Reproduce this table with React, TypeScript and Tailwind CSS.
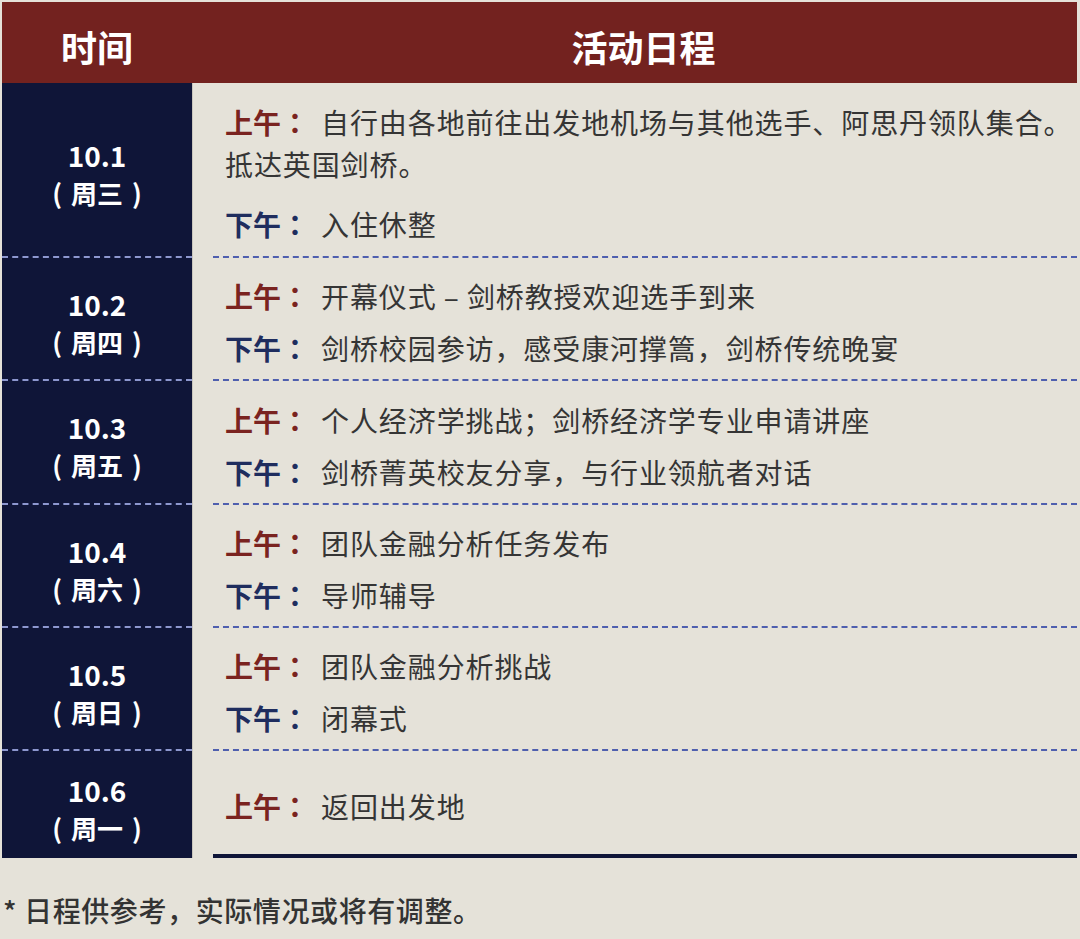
import React from "react";

type Item = { label: "上午" | "下午"; lines: string[] };
type Row = { date: string; week: string; h: number; items: Item[]; gap: number };

const rows: Row[] = [
  {
    date: "10.1",
    week: "周三",
    h: 175,
    gap: 18,
    items: [
      { label: "上午", lines: ["自行由各地前往出发地机场与其他选手、阿思丹领队集合。", "抵达英国剑桥。"] },
      { label: "下午", lines: ["入住休整"] },
    ],
  },
  {
    date: "10.2",
    week: "周四",
    h: 123,
    gap: 10,
    items: [
      { label: "上午", lines: ["开幕仪式 – 剑桥教授欢迎选手到来"] },
      { label: "下午", lines: ["剑桥校园参访，感受康河撑篙，剑桥传统晚宴"] },
    ],
  },
  {
    date: "10.3",
    week: "周五",
    h: 124,
    gap: 10,
    items: [
      { label: "上午", lines: ["个人经济学挑战；剑桥经济学专业申请讲座"] },
      { label: "下午", lines: ["剑桥菁英校友分享，与行业领航者对话"] },
    ],
  },
  {
    date: "10.4",
    week: "周六",
    h: 123,
    gap: 10,
    items: [
      { label: "上午", lines: ["团队金融分析任务发布"] },
      { label: "下午", lines: ["导师辅导"] },
    ],
  },
  {
    date: "10.5",
    week: "周日",
    h: 123,
    gap: 10,
    items: [
      { label: "上午", lines: ["团队金融分析挑战"] },
      { label: "下午", lines: ["闭幕式"] },
    ],
  },
  {
    date: "10.6",
    week: "周一",
    h: 107,
    gap: 10,
    items: [{ label: "上午", lines: ["返回出发地"] }],
  },
];

const font = { fontFamily: '"Noto Sans CJK SC", "Noto Sans", sans-serif' };
const tc = { fontFamily: '"Noto Sans CJK TC", "Noto Sans CJK SC", sans-serif' };

export default function App() {
  return (
    <div className="w-[1080px] h-[939px] bg-[#e5e2d9] overflow-hidden" style={font}>
      <div className="pt-[2px] pl-[2px] w-[1077px]">
        {/* header */}
        <div className="flex h-[81px] bg-[#73221f] text-white font-bold text-[36px] leading-none">
          <div className="w-[190px] flex items-center justify-center pt-[6px]">时间</div>
          <div className="flex-1 flex items-center justify-center pt-[6px] pl-[18px]">活动日程</div>
        </div>
        {/* body */}
        <div className="flex flex-col">
          {rows.map((r, i) => {
            const last = i === rows.length - 1;
            return (
              <div key={r.date} className="flex" style={{ height: r.h }}>
                <div
                  className={
                    "w-[190px] bg-[#0f1538] text-white flex flex-col items-center justify-center font-bold pt-[8px] " +
                    (last ? "" : "border-b-2 border-dashed border-[#8d97cf]")
                  }
                  style={tc}
                >
                  <div className="text-[28px] leading-[37px]">{r.date}</div>
                  <div className="text-[26px] leading-[37px] flex items-center gap-[9px]">
                    <span>(</span>
                    <span>{r.week}</span>
                    <span>)</span>
                  </div>
                </div>
                <div className="flex-1 border-l border-[#c9c6bd] pl-[20px] flex min-w-0">
                  <div
                    className={
                      "flex-1 flex flex-col justify-center pl-[12px] pt-[7px] min-w-0 " +
                      (last ? "border-b-4 border-[#0f1538]" : "border-b-2 border-dashed border-[#4f5fae]")
                    }
                    style={{ gap: r.gap }}
                  >
                    {r.items.map((it) => (
                      <div key={it.label} className="text-[28px] leading-[42px] text-[#353535] whitespace-nowrap">
                        <span
                          className={
                            "font-bold " + (it.label === "上午" ? "text-[#7a2320]" : "text-[#1f2d5e]")
                          }
                          style={tc}
                        >
                          {it.label}：
                        </span>
                        <span className="ml-[12px] tracking-[0.9px]">{it.lines[0]}</span>
                        {it.lines.slice(1).map((l) => (
                          <div key={l} className="tracking-[0.9px]">{l}</div>
                        ))}
                      </div>
                    ))}
                  </div>
                </div>
              </div>
            );
          })}
        </div>
      </div>
      <div className="mt-[34px] pl-[3px] text-[28px] leading-[36px] font-medium tracking-[0.6px] text-[#333333]">
        * 日程供参考，实际情况或将有调整。
      </div>
    </div>
  );
}
